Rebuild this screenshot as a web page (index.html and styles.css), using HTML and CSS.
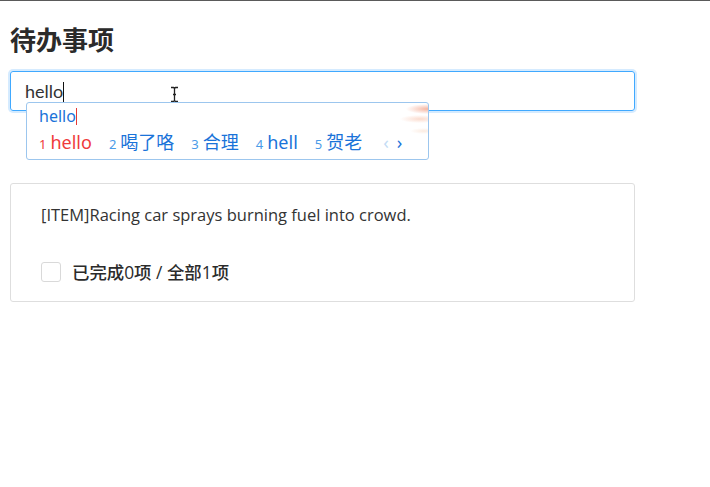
FILE: index.html
```html
<!DOCTYPE html>
<html lang="zh-CN">
<head>
    <meta charset="UTF-8">
    <title>待办事项</title>
    <link rel="stylesheet" href="styles.css">
</head>
<body>
    <div class="app">
        <h1 class="title">待办事项</h1>
        <div class="input-wrap">
            <div class="todo-input">hello<span class="caret"></span></div>
            <svg class="ibeam" width="9" height="17" viewBox="0 0 9 17">
                <path d="M1 1.5h2.5l1 1 1-1H8M1 15.5h2.5l1-1 1 1H8M4.5 2.5v12M3 8.5h3" fill="none" stroke="#222" stroke-width="1.3"/>
            </svg>
            <div class="ime">
                <div class="ime-glow"></div>
                <div class="ime-input">hello<span class="ime-caret"></span></div>
                <div class="ime-list">
                    <span class="cand active"><i>1</i>hello</span>
                    <span class="cand"><i>2</i>喝了咯</span>
                    <span class="cand"><i>3</i>合理</span>
                    <span class="cand"><i>4</i>hell</span>
                    <span class="cand"><i>5</i>贺老</span>
                    <span class="pager"><b class="prev">‹</b><b class="next">›</b></span>
                </div>
            </div>
        </div>
        <div class="card">
            <p class="item">[ITEM]Racing car sprays burning fuel into crowd.</p>
            <label class="summary">
                <span class="check"></span>
                已完成0项 / 全部1项
            </label>
        </div>
    </div>
</body>
</html>
```

FILE: styles.css
```css
body {
    margin: 0;
    border-top: 1px solid #5a5a5a;
    background: #fff;
    font-family: "Open Sans", "Noto Sans CJK SC", sans-serif;
    color: #333;
}

.app {
    width: 625px;
    padding: 0 10px;
}

.title {
    margin: 20px 0 0;
    font-family: "Noto Sans CJK SC", sans-serif;
    font-size: 26px;
    line-height: 36px;
    font-weight: 600;
    color: #2b2b2b;
}

.input-wrap {
    position: relative;
    margin-top: 14px;
}

.todo-input {
    box-sizing: border-box;
    height: 40px;
    padding: 0 14px;
    border: 1px solid #40a9ff;
    border-radius: 3px;
    box-shadow: 0 0 0 2px rgba(24, 144, 255, 0.18);
    font-family: Lato, sans-serif;
    font-size: 18px;
    line-height: 38px;
    color: #333;
}

.caret {
    display: inline-block;
    width: 1px;
    height: 20px;
    background: #111;
    vertical-align: -4px;
}

.ibeam {
    position: absolute;
    left: 160px;
    top: 15px;
}

/* IME candidate window */
.ime {
    position: absolute;
    left: 16px;
    top: 31px;
    width: 403px;
    height: 58px;
    box-sizing: border-box;
    padding: 3px 12px 0;
    background: #fff;
    border: 1px solid #9cc6ee;
    border-radius: 3px;
    overflow: hidden;
}

.ime-glow {
    position: absolute;
    right: 0;
    top: 0;
    width: 50px;
    height: 40px;
    background:
        radial-gradient(ellipse 22px 5px at 50px 6px, rgba(238, 130, 95, 0.6), transparent),
        radial-gradient(ellipse 20px 4px at 42px 16px, rgba(245, 175, 145, 0.45), transparent),
        radial-gradient(ellipse 14px 3px at 46px 28px, rgba(245, 200, 170, 0.35), transparent);
}

.ime-input {
    font-family: "Noto Sans", sans-serif;
    font-size: 16px;
    line-height: 20px;
    color: #1a73d9;
}

.ime-caret {
    display: inline-block;
    width: 1px;
    height: 17px;
    background: #e53935;
    vertical-align: -3px;
}

.ime-list {
    display: flex;
    align-items: baseline;
    margin-top: 5px;
    font-family: "Noto Sans", "Noto Sans CJK SC", sans-serif;
    font-size: 18px;
    line-height: 22px;
    color: #1a73d9;
}

.cand {
    margin-right: 17px;
}

.cand i {
    font-style: normal;
    font-size: 13px;
    margin-right: 4px;
    color: #4a9be8;
}

.cand.active,
.cand.active i {
    color: #ef3b3b;
}

.pager {
    margin-left: 4px;
    font-size: 18px;
}

.pager b {
    font-weight: 400;
    margin-right: 8px;
}

.pager .prev {
    color: #c3dcf5;
}

.card {
    margin-top: 72px;
    padding: 19px 30px 19px;
    border: 1px solid #dedede;
    border-radius: 3px;
}

.item {
    margin: 0;
    font-size: 16.5px;
    line-height: 24px;
    color: #333;
}

.summary {
    display: flex;
    align-items: center;
    margin-top: 35px;
    font-size: 17.4px;
    line-height: 20px;
    font-weight: 500;
    color: #2b2b2b;
}

.check {
    box-sizing: border-box;
    width: 20px;
    height: 20px;
    margin-right: 11px;
    border: 1px solid #d9d9d9;
    border-radius: 3px;
}
```
